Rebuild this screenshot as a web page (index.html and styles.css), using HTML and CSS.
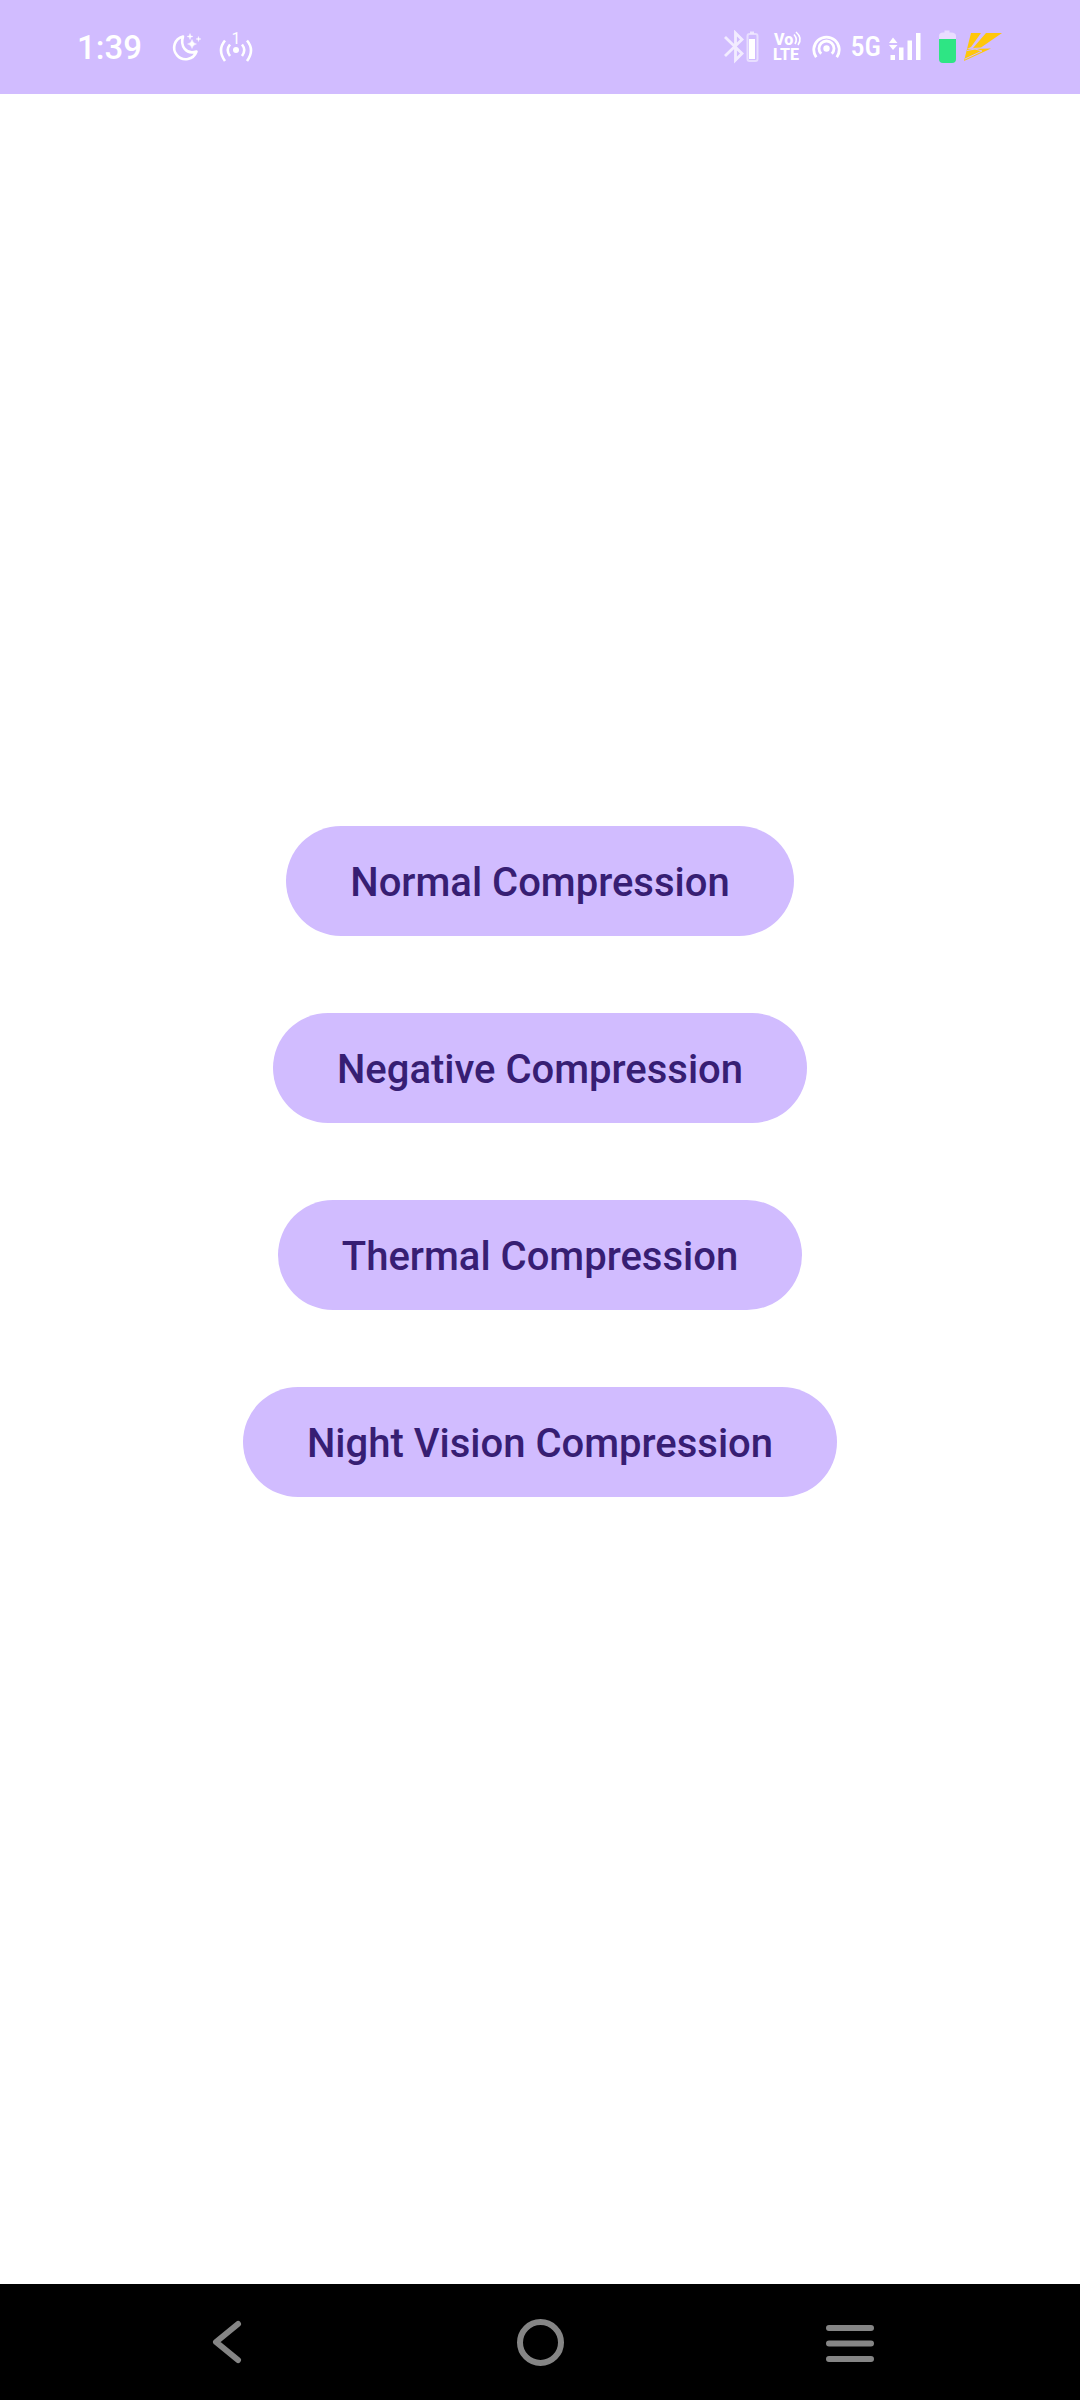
FILE: index.html
```html
<!DOCTYPE html>
<html lang="en">
<head>
<meta charset="utf-8">
<meta name="viewport" content="width=device-width, initial-scale=1">
<title>Compression</title>
<link rel="stylesheet" href="styles.css">
</head>
<body>
<header class="status">
  <div class="status-group">
    <time class="clock">1:39</time>
    <svg class="moon" width="34" height="34" viewBox="0 0 34 34" aria-hidden="true">
      <path d="M13 6.5A11.5 11.5 0 1 0 26.500 21.500C16 25 10 16 13 6.500Z" fill="none" stroke="#fff" stroke-width="2.600" stroke-linejoin="round"/>
      <path d="M22 9.500Q22.800 13.200 26.500 14Q22.800 14.800 22 18.500Q21.200 14.800 17.500 14Q21.200 13.200 22 9.500ZM20 3.500L20.700 5.800L23 6.500L20.700 7.200L20 9.500L19.300 7.200L17 6.500L19.300 5.800ZM28.500 6.500L29.100 8.400L31 9L29.100 9.600L28.500 11.500L27.900 9.600L26 9L27.900 8.400Z" fill="#fff" stroke="#fff" stroke-width=".4"/>
    </svg>
    <svg width="40" height="34" viewBox="0 0 40 34" aria-hidden="true">
      <circle cx="20" cy="20" r="3" fill="#fff"/>
      <g fill="none" stroke="#fff" stroke-width="2.600">
        <path d="M14 14.500Q9.500 20 14 26M26 14.500Q30.500 20 26 26M9 10.500Q1 20 9 31M31 10.500Q39 20 31 31"/>
      </g>
      <text class="hotspot-count" x="20" y="14" text-anchor="middle">1</text>
    </svg>
  </div>
  <div class="status-group status-right">
    <svg width="44" height="34" viewBox="0 0 44 34" aria-hidden="true">
      <path d="M3 7L20 23.500L13.500 30V3L20 9.500L3 26" fill="none" stroke="#fff" stroke-opacity=".72" stroke-width="2.800"/>
      <path d="M28 1.500h4v2h-4z" fill="#fff" fill-opacity=".6"/>
      <rect x="25.500" y="4" width="10" height="27" rx="2" fill="none" stroke="#fff" stroke-opacity=".5" stroke-width="2"/>
      <path d="M27 9h6v20h-6z" fill="#fff"/>
    </svg>
    <svg class="volte" width="30" height="34" viewBox="0 0 30 34" role="img" aria-label="VoLTE">
      <text x="0" y="15">Vo</text>
      <text x="-1" y="30">LTE</text>
      <path d="M20 4.500Q24 9 21 14M22 2Q29 8 24 15" fill="none" stroke="#fff" stroke-width="1.600"/>
    </svg>
    <svg width="31" height="34" viewBox="1 0 31 34" aria-hidden="true">
      <circle cx="15.500" cy="18.500" r="3.200" fill="#fff"/>
      <path d="M10.200 23.800A7.500 7.500 0 1 1 20.800 23.800M5.200 27.200A12.700 12.700 0 1 1 25.800 27.200" fill="none" stroke="#fff" stroke-width="2.800"/>
    </svg>
    <span class="network">5G</span>
    <svg width="32" height="34" viewBox="1 0 32 34" aria-hidden="true">
      <path d="M2.500 25h4.500v5h-4.500zM11 17.500h4.500v12.500h-4.500zM19.500 10.500h4.500v19.500h-4.500zM28 3h4.500v27h-4.500zM5 7.500L9.500 13H1ZM1 15H9.500L5 20Z" fill="#fff"/>
    </svg>
    <svg class="battery" width="17" height="34" viewBox="2 0 17 34" aria-hidden="true">
      <path d="M2 9V6Q2 2.500 6 2.500H7.500V.5H12.500V2.500H14Q19 2.500 19 6V9Z" fill="#e9ddff"/>
      <path d="M2 9H19V29Q19 33 15 33H6Q2 33 2 29Z" fill="#2ee584"/>
    </svg>
    <svg width="40" height="34" viewBox="2 0 40 34" aria-hidden="true">
      <path d="M9 3H19L9 17L5 19ZM24 3H40L19 17.500L11 18ZM5 19L29 18.500L2 31Z" fill="#ffc70a"/>
      <path d="M5 20.500L13 19L20 21L3 29" fill="none" stroke="#d1bcff" stroke-width="1"/>
    </svg>
  </div>
</header>
<main class="content">
  <button class="pill" type="button">Normal Compression</button>
  <button class="pill" type="button">Negative Compression</button>
  <button class="pill" type="button">Thermal Compression</button>
  <button class="pill" type="button">Night Vision Compression</button>
</main>
<nav class="navbar">
  <button type="button" aria-label="Back">
    <svg width="52" height="52" viewBox="0 0 52 52"><path d="M36 8L14 26L36 44"/></svg>
  </button>
  <button type="button" aria-label="Home">
    <svg width="52" height="52" viewBox="0 0 52 52"><circle cx="26.500" cy="26.500" r="20.500"/></svg>
  </button>
  <button type="button" aria-label="Recent apps">
    <svg width="52" height="52" viewBox="0 0 52 52"><path d="M3 12H45M3 27.500H45M3 43H45"/></svg>
  </button>
</nav>
</body>
</html>
```
FILE: styles.css
```css
* {
  box-sizing: border-box;
}

body {
  margin: 0;
  min-height: 100vh;
  display: flex;
  flex-direction: column;
  background: #fff;
  font-family: Roboto, sans-serif;
}

svg {
  display: block;
  flex: none;
}

.status {
  display: flex;
  justify-content: space-between;
  align-items: center;
  height: 94px;
  padding: 0 76px 0 77px;
  background: #d1bcff;
  color: #fff;
}

.status-group {
  display: flex;
  align-items: center;
  gap: 12px;
}

.clock {
  padding-top: 2px;
  font-size: 33px;
  line-height: 40px;
  font-weight: 500;
}

.moon {
  margin-left: 16px;
}

.status-right {
  gap: 8px;
}

.hotspot-count {
  font-size: 16px;
  fill: #fff;
}

.volte {
  overflow: visible;
}

.volte text {
  font-size: 16px;
  font-weight: 800;
  fill: #fff;
}

.network {
  font-family: "Roboto Condensed", "Liberation Sans Narrow", Roboto, sans-serif;
  font-size: 28px;
  line-height: 32px;
  font-weight: 500;
}

.battery {
  margin-left: 10px;
}

.content {
  flex: 1;
  display: flex;
  flex-direction: column;
  align-items: center;
  justify-content: center;
  gap: 77px;
  padding: 0 24px 55px;
}

.pill {
  min-height: 110px;
  padding: 3px 64px 0;
  border: 0;
  border-radius: 55px;
  background: #d1bcff;
  color: #371e73;
  font-family: inherit;
  font-size: 40px;
  line-height: 56px;
  font-weight: 500;
}

.navbar {
  display: flex;
  height: 116px;
  padding: 0 72px;
  background: #000;
}

.navbar button {
  flex: 1;
  display: flex;
  align-items: center;
  justify-content: center;
  padding: 0;
  border: 0;
  background: none;
}

.navbar svg {
  fill: none;
  stroke: #858585;
  stroke-width: 6;
  stroke-linecap: round;
  stroke-linejoin: round;
}
```
